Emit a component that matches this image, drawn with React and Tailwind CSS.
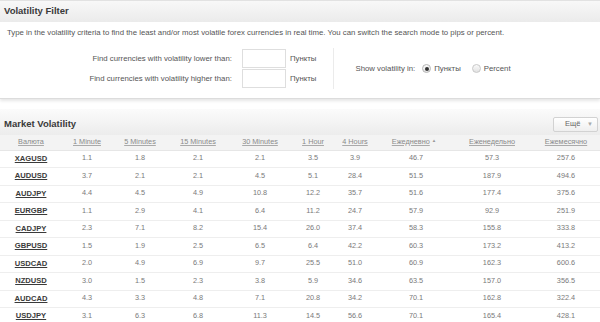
import React from "react";

const rows = [
  ["XAGUSD", "1.1", "1.8", "2.1", "2.1", "3.5", "3.9", "46.7", "57.3", "257.6"],
  ["AUDUSD", "3.7", "2.1", "2.1", "4.5", "5.1", "28.4", "51.5", "187.9", "494.6"],
  ["AUDJPY", "4.4", "4.5", "4.9", "10.8", "12.2", "35.7", "51.6", "177.4", "375.6"],
  ["EURGBP", "1.1", "2.9", "4.1", "6.4", "11.2", "24.7", "57.9", "92.9", "251.9"],
  ["CADJPY", "2.3", "7.1", "8.2", "15.4", "26.0", "37.4", "58.3", "155.8", "333.8"],
  ["GBPUSD", "1.5", "1.9", "2.5", "6.5", "6.4", "42.2", "60.3", "173.2", "413.2"],
  ["USDCAD", "2.0", "4.9", "6.9", "9.7", "25.5", "51.0", "60.9", "162.3", "600.6"],
  ["NZDUSD", "3.0", "1.5", "2.3", "3.8", "5.9", "34.6", "63.5", "157.0", "356.5"],
  ["AUDCAD", "4.3", "3.3", "4.8", "7.1", "20.8", "34.2", "70.1", "162.8", "322.4"],
  ["USDJPY", "3.1", "6.3", "6.8", "11.3", "14.5", "56.6", "70.1", "165.4", "428.1"],
];

const headers = [
  "Валюта",
  "1 Minute",
  "5 Minutes",
  "15 Minutes",
  "30 Minutes",
  "1 Hour",
  "4 Hours",
  "Ежедневно",
  "Еженедельно",
  "Ежемесячно",
];

const widths = ["w-[62px]", "w-[50px]", "w-[56px]", "w-[60px]", "w-[64px]", "w-[42px]", "w-[42px]", "w-[76px]", "w-[80px]", "w-[68px]"];

export default function App() {
  return (
    <div className="w-[600px] h-[322px] overflow-hidden bg-white font-['Liberation_Sans',Arial,sans-serif]">
      {/* Volatility Filter panel */}
      <div className="border-b border-[#dcdcdc] shadow-[0_2px_3px_rgba(0,0,0,0.10)]">
        <div className="h-[22px] border-t border-[#e2e2e2] bg-gradient-to-b from-[#f8f8f8] to-[#ebebeb] flex items-center px-[4px] text-[9.5px] font-bold text-[#3a3a3a]">
          Volatility Filter
        </div>
        <div className="pt-[6px] pb-[9px] px-[7px] text-[7.8px] text-[#555]">
          <p className="leading-[10px]">
            Type in the volatility criteria to find the least and/or most volatile forex currencies in real time. You can switch the search mode to pips or percent.
          </p>
          <div className="mt-[10px] flex justify-center">
            <div className="grid grid-cols-[auto_auto_auto] items-center gap-y-[1px] pr-[17px] border-r border-[#ebebeb] py-[1px]">
              <span className="text-right pr-[10px]">Find currencies with volatility lower than:</span>
              <div className="w-[44px] h-[19px] border border-[#dedede] bg-white"></div>
              <span className="pl-[4px]">Пункты</span>
              <span className="text-right pr-[10px]">Find currencies with volatility higher than:</span>
              <div className="w-[44px] h-[19px] border border-[#dedede] bg-white"></div>
              <span className="pl-[4px]">Пункты</span>
            </div>
            <div className="pl-[21px] flex items-center">
              <span>Show volatility in:</span>
              <span className="ml-[7px] w-[9px] h-[9px] rounded-full border border-[#b5b5b5] bg-gradient-to-b from-[#fafafa] to-[#e4e4e4] flex items-center justify-center">
                <span className="w-[4px] h-[4px] rounded-full bg-[#333]"></span>
              </span>
              <span className="ml-[3px]">Пункты</span>
              <span className="ml-[11px] w-[9px] h-[9px] rounded-full border border-[#c8c8c8] bg-gradient-to-b from-[#fafafa] to-[#e2e2e2]"></span>
              <span className="ml-[3px]">Percent</span>
            </div>
          </div>
        </div>
      </div>

      {/* Market Volatility panel */}
      <div className="mt-[10px]">
        <div className="h-[26px] pt-[4px] bg-gradient-to-b from-[#fbfbfb] to-[#ececec] flex items-center justify-between pl-[4px] pr-[2px]">
          <span className="text-[9.5px] font-bold text-[#3a3a3a]">Market Volatility</span>
          <div className="w-[45px] h-[15px] border border-[#d2d2d2] rounded-[2px] bg-gradient-to-b from-white to-[#efefef] flex items-center text-[7.5px] text-[#666]">
            <span className="ml-[11px]">Ещё</span>
            <span className="ml-auto mr-[4px] text-[6px] text-[#aaa]">▼</span>
          </div>
        </div>
        <table className="table-fixed w-[600px] border-collapse text-[7.3px]">
          <colgroup>
            {widths.map((w, i) => (
              <col key={i} className={w} />
            ))}
          </colgroup>
          <thead>
            <tr className="h-[15px] bg-[#f3f3f3] border-b border-[#e6e6e6]">
              {headers.map((h, i) => (
                <th key={i} className="font-normal text-center text-[#8a8a8a] p-0">
                  <span className="underline decoration-[#aaa]">{h}</span>
                  {i === 7 && <span className="ml-[2px] text-[4.5px] text-[#999] align-middle">▲</span>}
                </th>
              ))}
            </tr>
          </thead>
          <tbody>
            {rows.map((r) => (
              <tr key={r[0]} className="h-[17.5px] border-b border-[#eeeeee]">
                {r.map((c, i) =>
                  i === 0 ? (
                    <td key={i} className="text-center p-0">
                      <span className="text-[7.6px] font-bold text-[#3a3a3a] underline">{c}</span>
                    </td>
                  ) : (
                    <td key={i} className={"text-center p-0 text-[#7a7a7a]" + (i === 7 ? " pl-[4px]" : "")}>
                      {c}
                    </td>
                  )
                )}
              </tr>
            ))}
          </tbody>
        </table>
      </div>
    </div>
  );
}
